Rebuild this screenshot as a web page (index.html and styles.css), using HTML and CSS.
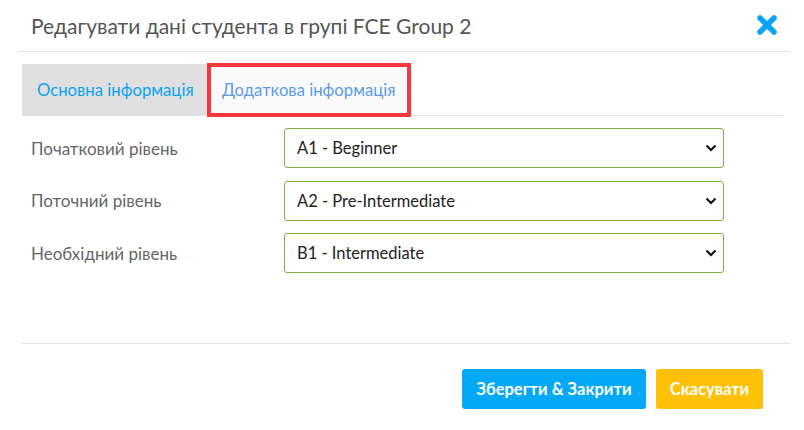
FILE: index.html
```html
<!DOCTYPE html>
<html lang="uk">
<head>
<meta charset="utf-8">
<link rel="stylesheet" href="styles.css">
</head>
<body>
<div class="modal">
  <div class="modal-header">
    <h1 class="title">Редагувати дані студента в групі FCE Group 2</h1>
    <button class="close" aria-label="close">
      <svg width="22" height="22" viewBox="0 0 22 22"><path d="M4 4 L18 18 M18 4 L4 18" stroke="#0aa5f2" stroke-width="5.5" stroke-linecap="round"/></svg>
    </button>
  </div>
  <div class="modal-body">
    <div class="tabs">
      <div class="tab tab-main">Основна інформація</div>
      <div class="tab tab-extra">Додаткова інформація</div>
    </div>
    <div class="form">
      <div class="row">
        <label class="label">Початковий рівень</label>
        <div class="select"><span>A1 - Beginner</span><svg class="chev" width="12" height="8" viewBox="0 0 12 8"><path d="M1.5 1.5 L6 6 L10.5 1.5" fill="none" stroke="#111" stroke-width="2.2"/></svg></div>
      </div>
      <div class="row">
        <label class="label">Поточний рівень</label>
        <div class="select"><span>A2 - Pre-Intermediate</span><svg class="chev" width="12" height="8" viewBox="0 0 12 8"><path d="M1.5 1.5 L6 6 L10.5 1.5" fill="none" stroke="#111" stroke-width="2.2"/></svg></div>
      </div>
      <div class="row">
        <label class="label">Необхідний рівень</label>
        <div class="select"><span>B1 - Intermediate</span><svg class="chev" width="12" height="8" viewBox="0 0 12 8"><path d="M1.5 1.5 L6 6 L10.5 1.5" fill="none" stroke="#111" stroke-width="2.2"/></svg></div>
      </div>
    </div>
  </div>
  <div class="modal-footer">
    <button class="btn btn-save">Зберегти &amp; Закрити</button>
    <button class="btn btn-cancel">Скасувати</button>
  </div>
</div>
</body>
</html>
```
FILE: styles.css
```css
* { box-sizing: border-box; }
html, body { margin: 0; padding: 0; background: #fff; }
body {
  font-family: Lato, "Noto Sans", sans-serif;
  width: 804px;
  height: 430px;
  overflow: hidden;
}
.modal { width: 804px; height: 430px; }
.modal-header {
  margin: 0 14px 0 18px;
  height: 52px;
  border-bottom: 1px solid #e2e2e2;
  display: flex;
  align-items: center;
  justify-content: space-between;
  padding: 0 12px 0 13px;
}
.title {
  margin: 0;
  font-size: 21px;
  font-weight: 400;
  color: #555;
}
.close {
  border: 0;
  background: none;
  padding: 0;
  margin-top: -2px;
  display: flex;
}
.modal-body {
  margin: 0 14px 0 22px;
  padding-top: 12px;
  height: 292px;
  border-bottom: 1px solid #e2e2e2;
}
.tabs {
  display: flex;
  height: 52px;
  border-bottom: 1px solid #e2e2e2;
  margin-right: 7px;
}
.tab {
  height: 52px;
  display: flex;
  align-items: center;
  font-size: 16.7px;
}
.tab-main {
  background: #e0e0e0;
  color: #0aa5f2;
  width: 186px;
  padding-left: 15px;
}
.tab-extra {
  background: #fafafa;
  color: #5b9ae6;
  width: 204px;
  height: 54px;
  margin-top: -1px;
  margin-left: -1px;
  border: 4.5px solid #f5383d;
  padding-left: 11px;
}
.form { padding-top: 6px; }
.row {
  display: flex;
  align-items: center;
  height: 52.5px;
}
.label {
  width: 262px;
  padding-left: 9px;
  font-size: 17px;
  color: #666;
}
.select {
  width: 440px;
  height: 40px;
  border: 1px solid #7cb342;
  border-radius: 3px;
  display: flex;
  align-items: center;
  justify-content: space-between;
  padding: 0 6px 0 12px;
  font-size: 16.5px;
  color: #222;
}
.modal-footer {
  display: flex;
  justify-content: flex-end;
  gap: 10px;
  padding: 25px 41px 0 0;
}
.btn {
  border: 0;
  border-radius: 3px;
  height: 40px;
  font-family: inherit;
  font-weight: 700;
  font-size: 16.5px;
  color: #fff;
  padding: 0;
}
.btn-save { background: #03a9f4; width: 184px; }
.btn-cancel { background: #ffc107; width: 107px; }
```
